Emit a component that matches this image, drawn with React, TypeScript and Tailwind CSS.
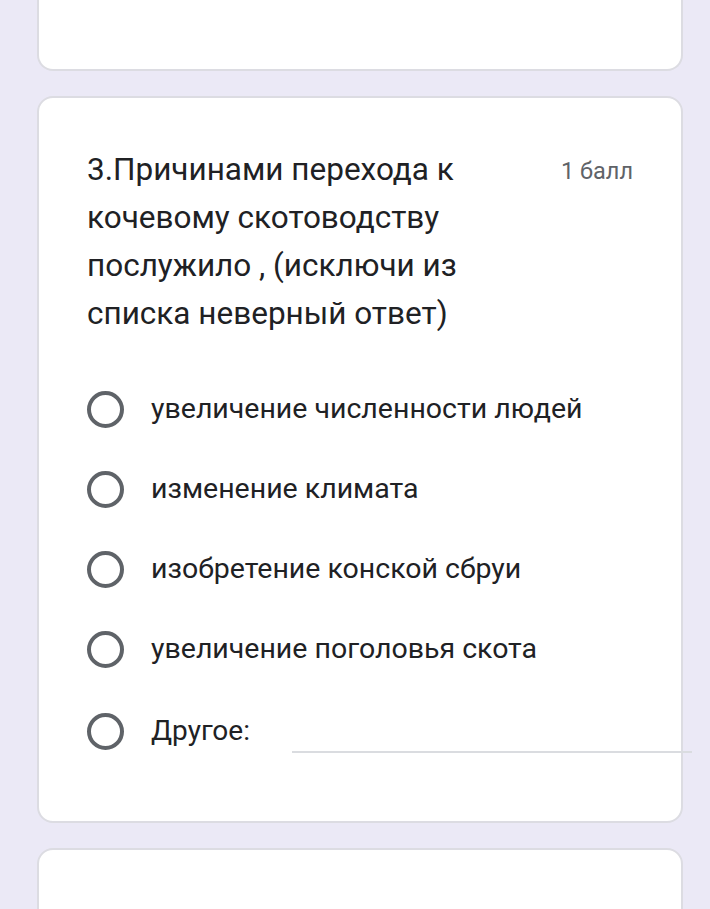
const options = [
  "увеличение численности людей",
  "изменение климата",
  "изобретение конской сбруи",
  "увеличение поголовья скота",
];

function Radio() {
  return <div className="w-[37px] h-[37px] shrink-0 rounded-full border-[4px] border-[#5f6368]" />;
}

export default function App() {
  return (
    <div
      className="w-[710px] h-[909px] overflow-hidden bg-[#ebe9f6] pl-[37px] pr-[27px] flex flex-col gap-[25px]"
      style={{ fontFamily: "Roboto, 'Noto Sans', sans-serif" }}
    >
      <div className="h-[71px] shrink-0 bg-white border-2 border-t-0 border-[#dcdce2] rounded-b-[16px]" />

      <div className="shrink-0 h-[727px] bg-white border-2 border-[#dcdce2] rounded-[16px] pt-[48px] pl-[48px] pr-[48px] relative">
        <div className="flex justify-between">
          <h2 className="text-[31.5px] leading-[48px] text-[#202124]">
            3.Причинами перехода к<br />
            кочевому скотоводству<br />
            послужило , (исключи из<br />
            списка неверный ответ)
          </h2>
          <span className="text-[23.5px] leading-[48px] text-[#5f6368] mt-[1px]">1 балл</span>
        </div>

        <div className="mt-[31px] flex flex-col">
          {options.map((o) => (
            <div key={o} className="h-[80px] flex items-center gap-[27px]">
              <Radio />
              <span className="text-[28.5px] text-[#202124]">{o}</span>
            </div>
          ))}
          <div className="h-[82px] flex items-center gap-[27px] pt-[2px]">
            <Radio />
            <span className="text-[28px] text-[#202124]">Другое:</span>
            <div className="flex-1 self-stretch relative">
              <div className="absolute left-[15px] right-[-59px] top-[60px] h-[2px] bg-[#dadce0]" />
            </div>
          </div>
        </div>
      </div>

      <div className="shrink-0 h-[120px] bg-white border-2 border-[#dcdce2] rounded-[16px] pt-[49px] pl-[48px]">
        <span className="text-[29px] text-[#202124]">3И</span>
      </div>
    </div>
  );
}
